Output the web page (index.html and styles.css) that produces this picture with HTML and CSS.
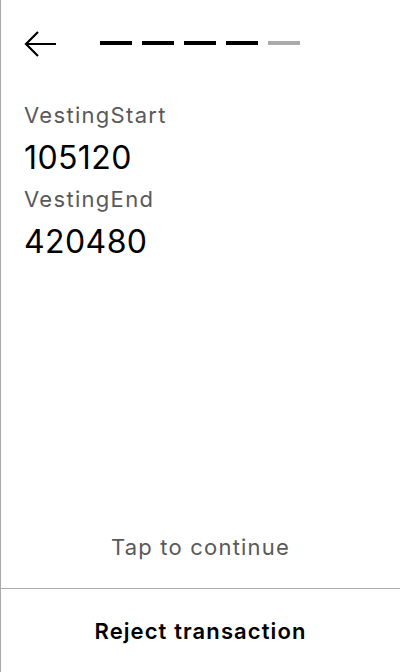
FILE: index.html
```html
<!DOCTYPE html>
<html>
<head>
<meta charset="utf-8">
<link rel="stylesheet" href="styles.css">
</head>
<body>
<div class="screen">
  <div class="header">
    <svg class="back" width="34" height="28" viewBox="0 0 34 28">
      <path d="M33 14H3M15 2L3 14L15 26" fill="none" stroke="#000" stroke-width="2.2"/>
    </svg>
    <div class="steps">
      <span class="step done"></span>
      <span class="step done"></span>
      <span class="step done"></span>
      <span class="step done"></span>
      <span class="step"></span>
    </div>
  </div>
  <div class="content">
    <div class="label">VestingStart</div>
    <div class="value">105120</div>
    <div class="label next">VestingEnd</div>
    <div class="value">420480</div>
  </div>
  <div class="tap">Tap to continue</div>
  <div class="reject">Reject transaction</div>
</div>
</body>
</html>
```
FILE: styles.css
```css
html, body {
  margin: 0;
  padding: 0;
  background: #fff;
}
body {
  font-family: Inter, "Noto Sans", sans-serif;
  width: 400px;
  height: 672px;
  overflow: hidden;
}
.screen {
  box-sizing: border-box;
  width: 400px;
  height: 672px;
  border-left: 1px solid #aaaaaa;
  display: flex;
  flex-direction: column;
}
.header {
  display: flex;
  align-items: center;
  height: 28px;
  margin-top: 30px;
  padding-left: 22px;
}
.back {
  display: block;
}
.steps {
  display: flex;
  gap: 10px;
  margin-left: 43px;
  margin-top: -3px;
}
.step {
  width: 32px;
  height: 4px;
  background: #aaaaaa;
}
.step.done {
  background: #000;
}
.content {
  padding: 43px 0 0 23px;
  flex: 1;
}
.label {
  font-size: 22px;
  line-height: 28px;
  letter-spacing: 1.3px;
  color: #595959;
}
.label.next {
  margin-top: 7px;
}
.value {
  font-size: 32px;
  line-height: 40px;
  margin-top: 9px;
  letter-spacing: 0.4px;
  color: #000;
}
.tap {
  box-sizing: border-box;
  height: 56px;
  text-align: center;
  font-size: 22px;
  line-height: 28px;
  letter-spacing: 1.2px;
  color: #595959;
  border-bottom: 1px solid #aaaaaa;
}
.reject {
  height: 83px;
  text-align: center;
  font-size: 22px;
  line-height: 84px;
  font-weight: 600;
  letter-spacing: 1.1px;
  color: #000;
}
```
